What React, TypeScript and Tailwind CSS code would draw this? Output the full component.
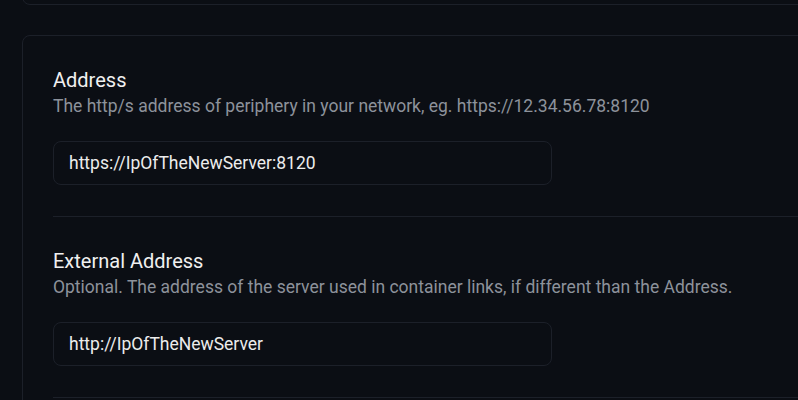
export default function App() {
  const fields = [
    {
      label: 'Address',
      description: 'The http/s address of periphery in your network, eg. https://12.34.56.78:8120',
      value: 'https://IpOfTheNewServer:8120',
    },
    {
      label: 'External Address',
      description: 'Optional. The address of the server used in container links, if different than the Address.',
      value: 'http://IpOfTheNewServer',
    },
  ];

  return (
    <div
      className="h-[400px] w-full overflow-hidden bg-[#0b0e14] text-[#f2f2f2]"
      style={{ fontFamily: 'Roboto, "Liberation Sans", sans-serif' }}
    >
      <div className="flex flex-col gap-[30px] pl-[22px]">
        <div className="-mt-[95px] mr-[-40px] h-[100px] rounded-lg border border-[#1c2029]" />
        <div className="mr-[-40px] rounded-lg border border-[#1c2029] px-[30px]">
          {fields.map((field, i) => (
            <div
              key={field.label}
              className={`flex flex-col gap-[23px] pt-[30px] pb-[31px] ${i > 0 ? 'border-t border-[#1c2029]' : ''}`}
            >
              <div className="flex flex-col">
                <p className="text-xl leading-7 text-[#f0f0f0]">{field.label}</p>
                <p className="text-[17.5px] leading-6 text-[#8d929b]">{field.description}</p>
              </div>
              <input
                readOnly
                value={field.value}
                className="h-11 w-[499px] rounded-lg border border-[#1c2029] bg-transparent px-[15px] text-[17.5px] text-[#ececec] outline-none"
              />
            </div>
          ))}
          {/* next field continues below the fold */}
          <div className="h-[180px] border-t border-[#1c2029]" />
        </div>
      </div>
    </div>
  );
}
